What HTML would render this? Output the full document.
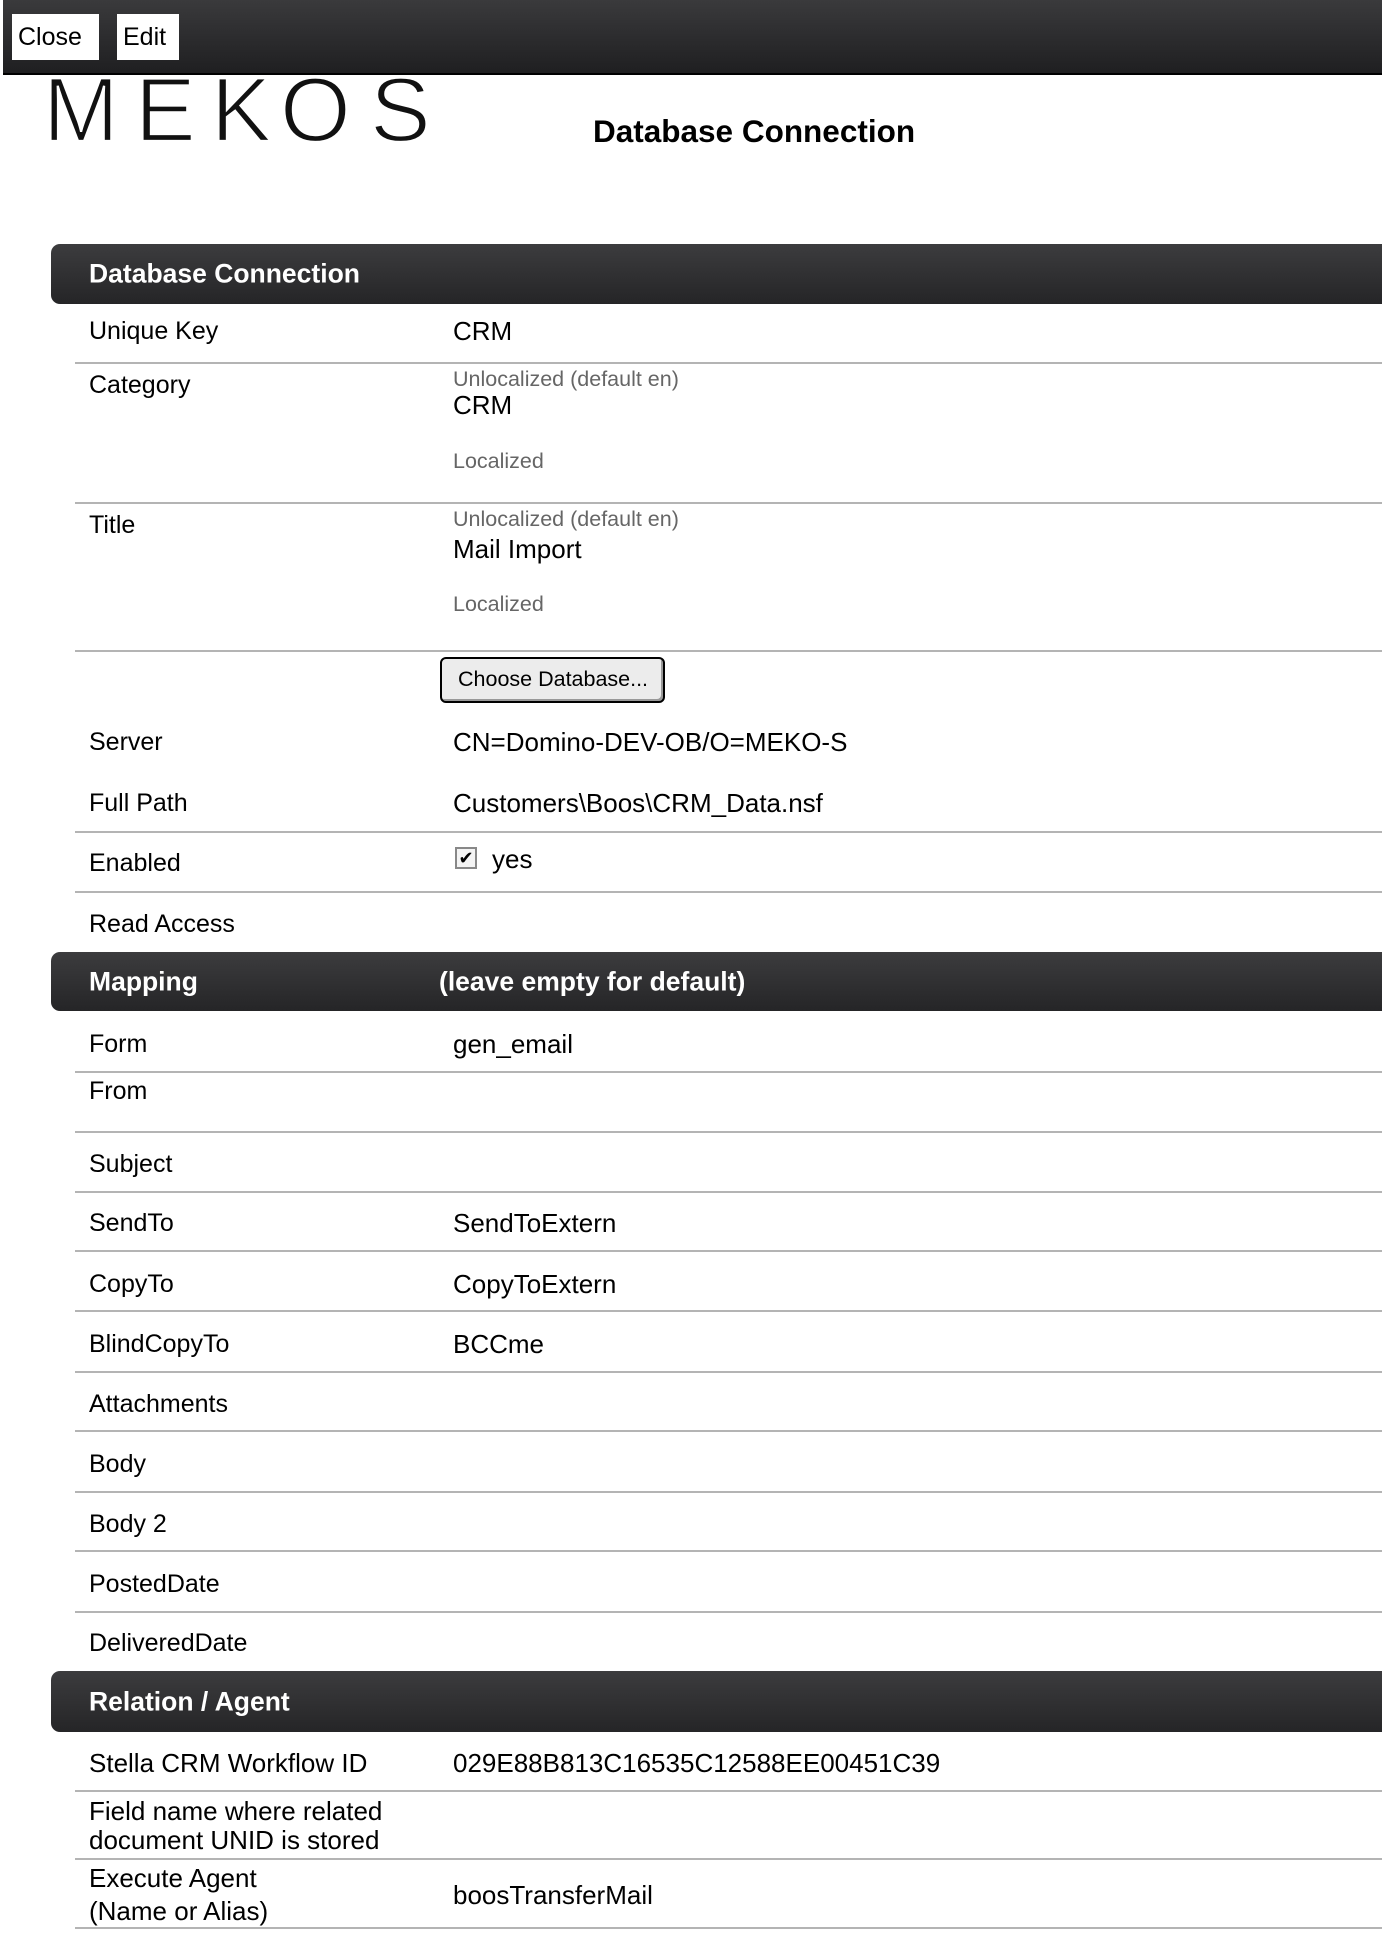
<!DOCTYPE html>
<html><head><meta charset="utf-8"><style>
*{margin:0;padding:0;box-sizing:border-box}
body{width:1382px;height:1938px;position:relative;background:#fff;font-family:"Liberation Sans",Arial,sans-serif;color:#000;overflow:hidden}
.a{position:absolute;white-space:nowrap;line-height:30px}
.t{font-size:25px;height:30px}
.v{font-size:26px}
.g{font-size:21.5px;color:#666}
.hr{position:absolute;left:75px;right:0;height:2px;background:#b4b4b4}
.hd{position:absolute;left:51px;right:0;background:linear-gradient(#3c3c3e,#252527);border-radius:9px 0 0 9px;color:#fff;font-weight:bold;font-size:26.5px}
.hd span{position:absolute;top:50%;transform:translateY(-50%)}
.btn{position:absolute;background:#fff;font-size:25px;line-height:46px;top:14px;height:46px;padding-left:6px}
</style></head><body>
<div style="position:absolute;left:3px;top:0;right:0;height:75px;background:linear-gradient(#3a3a3c,#1f1f21);border-bottom:2px solid #000"></div>
<div class="btn" style="left:12px;width:87px">Close</div>
<div class="btn" style="left:117px;width:62px">Edit</div>
<svg style="position:absolute;left:0;top:60px" width="460" height="100">
<g font-family="Liberation Sans,sans-serif" font-size="91" fill="#111" stroke="#fff" stroke-width="2.2">
<text x="43" y="81">M</text><text x="135" y="81">E</text><text x="211" y="81">K</text><text x="280" y="81">O</text><text x="370" y="81">S</text>
</g></svg>
<div class="a" style="left:593px;top:116px;font-size:31.5px;font-weight:bold">Database Connection</div>

<div class="hd" style="top:244px;height:60px"><span style="left:38px">Database Connection</span></div>
<div class="a t" style="left:89px;top:316px">Unique Key</div><div class="a v" style="left:453px;top:316px">CRM</div>
<div class="hr" style="top:362px"></div>
<div class="a t" style="left:89px;top:370px">Category</div>
<div class="a g" style="left:453px;top:364px">Unlocalized (default en)</div>
<div class="a v" style="left:453px;top:390px">CRM</div>
<div class="a g" style="left:453px;top:446px">Localized</div>
<div class="hr" style="top:502px"></div>
<div class="a t" style="left:89px;top:510px">Title</div>
<div class="a g" style="left:453px;top:504px">Unlocalized (default en)</div>
<div class="a" style="left:453px;top:534px;font-size:26px">Mail Import</div>
<div class="a g" style="left:453px;top:589px">Localized</div>
<div class="hr" style="top:650px"></div>
<div style="position:absolute;left:440px;top:657px;width:225px;height:46px;border:2px solid #000;border-radius:6px;background:#ececec;box-shadow:inset -2px -2px 0 #999;font-size:21.5px;line-height:40px;padding-left:16px;color:#000">Choose Database...</div>
<div class="a t" style="left:89px;top:727px">Server</div><div class="a v" style="left:453px;top:727px">CN=Domino-DEV-OB/O=MEKO-S</div>
<div class="a t" style="left:89px;top:788px">Full Path</div><div class="a v" style="left:453px;top:788px">Customers\Boos\CRM_Data.nsf</div>
<div class="hr" style="top:831px"></div>
<div class="a t" style="left:89px;top:848px">Enabled</div>
<div style="position:absolute;left:455px;top:847px;width:22px;height:22px;border:2px solid #888;background:#f4f4f4;font-size:18px;line-height:18px;text-align:center">✔</div>
<div class="a v" style="left:492px;top:844px">yes</div>
<div class="hr" style="top:891px"></div>
<div class="a t" style="left:89px;top:909px">Read Access</div>
<div class="hd" style="top:952px;height:59px"><span style="left:38px">Mapping</span><span style="left:388px">(leave empty for default)</span></div>
<div class="a t" style="left:89px;top:1029px">Form</div><div class="a v" style="left:453px;top:1029px">gen_email</div>
<div class="hr" style="top:1071px"></div>
<div class="a t" style="left:89px;top:1076px">From</div>
<div class="hr" style="top:1131px"></div>
<div class="a t" style="left:89px;top:1149px">Subject</div>
<div class="hr" style="top:1191px"></div>
<div class="a t" style="left:89px;top:1208px">SendTo</div><div class="a v" style="left:453px;top:1208px">SendToExtern</div>
<div class="hr" style="top:1250px"></div>
<div class="a t" style="left:89px;top:1269px">CopyTo</div><div class="a v" style="left:453px;top:1269px">CopyToExtern</div>
<div class="hr" style="top:1310px"></div>
<div class="a t" style="left:89px;top:1329px">BlindCopyTo</div><div class="a v" style="left:453px;top:1329px">BCCme</div>
<div class="hr" style="top:1371px"></div>
<div class="a t" style="left:89px;top:1389px">Attachments</div>
<div class="hr" style="top:1430px"></div>
<div class="a t" style="left:89px;top:1449px">Body</div>
<div class="hr" style="top:1491px"></div>
<div class="a t" style="left:89px;top:1509px">Body 2</div>
<div class="hr" style="top:1550px"></div>
<div class="a t" style="left:89px;top:1569px">PostedDate</div>
<div class="hr" style="top:1611px"></div>
<div class="a t" style="left:89px;top:1628px">DeliveredDate</div>
<div class="hd" style="top:1671px;height:61px"><span style="left:38px">Relation / Agent</span></div>
<div class="a t" style="left:89px;top:1748px;font-size:26px">Stella CRM Workflow ID</div><div class="a v" style="left:453px;top:1748px">029E88B813C16535C12588EE00451C39</div>
<div class="hr" style="top:1790px"></div>
<div class="a t" style="left:89px;top:1796px;font-size:26px">Field name where related</div>
<div class="a t" style="left:89px;top:1825px;font-size:26px">document UNID is stored</div>
<div class="hr" style="top:1858px"></div>
<div class="a t" style="left:89px;top:1863px;font-size:26px">Execute Agent</div>
<div class="a t" style="left:89px;top:1896px;font-size:26px">(Name or Alias)</div>
<div class="a v" style="left:453px;top:1880px">boosTransferMail</div>
<div class="hr" style="top:1927px"></div>
</body></html>
